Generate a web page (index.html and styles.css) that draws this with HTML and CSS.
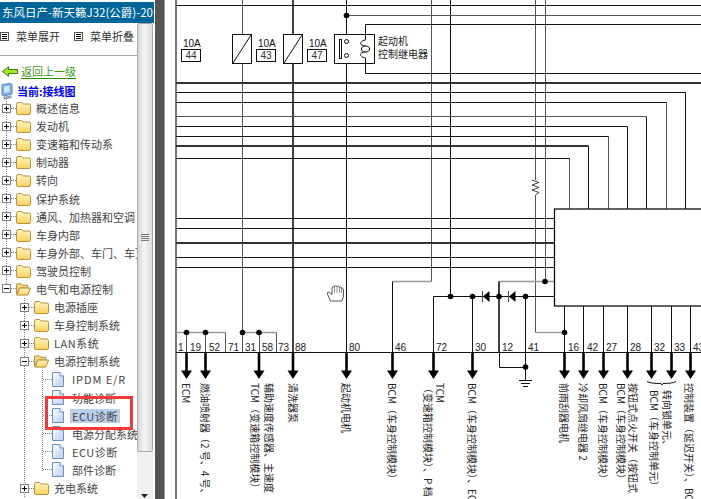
FILE: index.html
```html
<!DOCTYPE html>
<html lang="zh">
<head>
<meta charset="utf-8">
<title>接线图</title>
<link rel="stylesheet" href="styles.css">
</head>
<body>
<svg class="sprites" width="0" height="0" aria-hidden="true">
  <defs>
    <linearGradient id="fold" x1="0" y1="0" x2="0" y2="1"><stop offset="0" stop-color="#fff6c4"/><stop offset="1" stop-color="#fbd25c"/></linearGradient>
    <linearGradient id="page" x1="0" y1="0" x2="1" y2="1"><stop offset="0" stop-color="#ffffff"/><stop offset="1" stop-color="#b9cdf0"/></linearGradient>
    <symbol id="i-plus" viewBox="0 0 9 9"><rect x=".5" y=".5" width="8" height="8" fill="#fff" stroke="#808080"/><path d="M2 4.5H7M4.5 2V7" stroke="#000" fill="none"/></symbol>
    <symbol id="i-minus" viewBox="0 0 9 9"><rect x=".5" y=".5" width="8" height="8" fill="#fff" stroke="#808080"/><path d="M2 4.5H7" stroke="#000" fill="none"/></symbol>
    <symbol id="i-folder" viewBox="0 0 15 14"><path d="M.5 3.5Q.5 1.5 2 1.5H5.5L7 3H13Q14.500 3 14.500 4.500V12Q14.500 13.500 13 13.500H2Q.5 13.500 .5 12Z" fill="url(#fold)" stroke="#b8923c"/></symbol>
    <symbol id="i-open" viewBox="0 0 16 14"><path d="M.5 3Q.5 1.500 2 1.500H5.500L7 3H12.500V6H4L.5 12.500Z" fill="#f6d87e" stroke="#a8863a"/><path d="M4 6H15.500L12.500 13.500H.8Z" fill="url(#fold)" stroke="#a8863a"/></symbol>
    <symbol id="i-file" viewBox="0 0 12 15"><path d="M.5.5H8L11.500 4V14.500H.5Z" fill="url(#page)" stroke="#6b8fc6"/><path d="M8 .5V4H11.500" fill="#fff" stroke="#6b8fc6"/></symbol>
  </defs>
</svg>

<div class="app">
  <aside class="sidebar">
    <div class="title">东风日产-新天籁J32(公爵)-20</div>
    <div class="side-body">
      <div class="pane">
        <div class="menu">
          <span class="menu-item"><svg class="menu-icon" viewBox="0 0 9 9"><rect x=".5" y=".5" width="8" height="8" fill="#fff" stroke="#555"/><path d="M2 2.500H7M2 4.500H7M2 6.500H7" stroke="#000"/></svg>菜单展开</span>
          <span class="menu-item"><svg class="menu-icon" viewBox="0 0 9 9"><rect x=".5" y=".5" width="8" height="8" fill="#fff" stroke="#555"/><path d="M2 2.500H7M2 4.500H7M2 6.500H7" stroke="#000"/></svg>菜单折叠</span>
        </div>
        <a class="back"><svg class="back-icon" viewBox="0 0 16 11"><path d="M.5 5.500L6.500.7V3.500H15.500V7.500H6.500V10.300Z" fill="#a6e22e" stroke="#2f8a00"/></svg><span class="back-text">返回上一级</span></a>
        <div class="current"><svg class="pc-icon" viewBox="0 0 12 17"><path d="M1 1.500L9 .5Q11 .5 11 2.500V11L3 13Q1 13 1 11Z" fill="#7db4ee" stroke="#5c7fb0"/><path d="M3 3.500L8.500 2.800V9L3 10Z" fill="#cfe6ff"/><path d="M2 14L10 12.500L11 15L3 16.500Z" fill="#8da0b8"/></svg><span>当前:接线图</span></div>

        <div class="list top">
          <div class="row"><svg class="exp"><use href="#i-plus"/></svg><i class="dash"></i><svg class="folder"><use href="#i-folder"/></svg><span class="label">概述信息</span></div>
          <div class="row"><svg class="exp"><use href="#i-plus"/></svg><i class="dash"></i><svg class="folder"><use href="#i-folder"/></svg><span class="label">发动机</span></div>
          <div class="row"><svg class="exp"><use href="#i-plus"/></svg><i class="dash"></i><svg class="folder"><use href="#i-folder"/></svg><span class="label">变速箱和传动系</span></div>
          <div class="row"><svg class="exp"><use href="#i-plus"/></svg><i class="dash"></i><svg class="folder"><use href="#i-folder"/></svg><span class="label">制动器</span></div>
          <div class="row"><svg class="exp"><use href="#i-plus"/></svg><i class="dash"></i><svg class="folder"><use href="#i-folder"/></svg><span class="label">转向</span></div>
          <div class="row"><svg class="exp"><use href="#i-plus"/></svg><i class="dash"></i><svg class="folder"><use href="#i-folder"/></svg><span class="label">保护系统</span></div>
          <div class="row"><svg class="exp"><use href="#i-plus"/></svg><i class="dash"></i><svg class="folder"><use href="#i-folder"/></svg><span class="label">通风、加热器和空调</span></div>
          <div class="row"><svg class="exp"><use href="#i-plus"/></svg><i class="dash"></i><svg class="folder"><use href="#i-folder"/></svg><span class="label">车身内部</span></div>
          <div class="row"><svg class="exp"><use href="#i-plus"/></svg><i class="dash"></i><svg class="folder"><use href="#i-folder"/></svg><span class="label">车身外部、车门、车顶</span></div>
          <div class="row"><svg class="exp"><use href="#i-plus"/></svg><i class="dash"></i><svg class="folder"><use href="#i-folder"/></svg><span class="label">驾驶员控制</span></div>
          <div class="row last"><svg class="exp"><use href="#i-minus"/></svg><i class="dash"></i><svg class="folder"><use href="#i-open"/></svg><span class="label">电气和电源控制</span></div>
        </div>
        <div class="list second">
          <div class="row"><svg class="exp"><use href="#i-plus"/></svg><i class="dash"></i><svg class="folder"><use href="#i-folder"/></svg><span class="label">电源插座</span></div>
          <div class="row"><svg class="exp"><use href="#i-plus"/></svg><i class="dash"></i><svg class="folder"><use href="#i-folder"/></svg><span class="label">车身控制系统</span></div>
          <div class="row"><svg class="exp"><use href="#i-plus"/></svg><i class="dash"></i><svg class="folder"><use href="#i-folder"/></svg><span class="label wide">LAN系统</span></div>
          <div class="row"><svg class="exp"><use href="#i-minus"/></svg><i class="dash"></i><svg class="folder"><use href="#i-open"/></svg><span class="label">电源控制系统</span></div>
          <div class="list third">
            <div class="row leaf"><i class="dash long"></i><svg class="file"><use href="#i-file"/></svg><span class="label wider">IPDM E/R</span></div>
            <div class="row leaf"><i class="dash long"></i><svg class="file"><use href="#i-file"/></svg><span class="label">功能诊断</span></div>
            <div class="row leaf"><i class="dash long"></i><svg class="file"><use href="#i-file"/></svg><span class="label selected wide">ECU诊断</span></div>
            <div class="row leaf"><i class="dash long"></i><svg class="file"><use href="#i-file"/></svg><span class="label">电源分配系统</span></div>
            <div class="row leaf"><i class="dash long"></i><svg class="file"><use href="#i-file"/></svg><span class="label wide">ECU诊断</span></div>
            <div class="row leaf last"><i class="dash long"></i><svg class="file"><use href="#i-file"/></svg><span class="label">部件诊断</span></div>
          </div>
          <div class="row"><svg class="exp"><use href="#i-plus"/></svg><i class="dash"></i><svg class="folder"><use href="#i-folder"/></svg><span class="label">充电系统</span></div>
        </div>
      </div>
      <div class="scrollbar">
        <div class="thumb"><span class="grip"></span></div>
        <svg class="scroll-arrow" viewBox="0 0 7 4"><path d="M0 0H7L3.500 4Z" fill="#222"/></svg>
      </div>
    </div>
  </aside>
  <div class="gutter"></div>

  <svg class="diagram" viewBox="165 0 536 499">
    <defs>
      <g id="arrow"><path class="shaft" d="M0 352V371"/><path class="head" d="M-5.500 370.500H5.500L0 379Z"/></g>
      <circle id="dot" r="2.800" class="dotfill"/>
    </defs>

    <!-- vertical wires -->
    <g class="wire gray">
      <path class="frame" d="M176 0V499"/>
      <path d="M242.500 0V34M242.500 63V333"/>
      <path d="M431.500 0V281.500"/>
      <path d="M535.500 0V180M535.500 195V332.500"/>
      <path d="M545.500 0V281.500"/>
      <path d="M569.500 158V209M608.500 136V209M666.500 102.500V209"/>
    </g>
    <g class="wire">
      <path class="heavy" d="M293 0V34M293 63V352"/>
      <path d="M346.500 0V41M346.500 56V352"/>
      <path d="M450.500 0V296"/>
      <path d="M588.500 146V209M627.500 126.500V209M646.500 116.500V209M685.500 92.500V209"/>
    </g>

    <!-- horizontal bus -->
    <g class="wire">
      <path d="M176 5.500H701"/>
      <path class="gray" d="M346 15.500H701"/>
      <path d="M365.500 24.500H701"/>
      <path d="M365.500 73.500H701"/>
      <path class="thick" d="M176 83H701"/>
      <path d="M176 92.500H685.500"/>
      <path d="M176 102.500H666.500"/>
      <path class="gray" d="M176 116.500H646.500"/>
      <path d="M176 126.500H627.500"/>
      <path d="M176 136.500H608.500"/>
      <path class="thick" d="M176 146H588.500"/>
      <path d="M176 158.500H569.500"/>
      <path d="M176 218.500H554"/>
      <path d="M176 228.500H554"/>
      <path class="thick" d="M176 243H554"/>
      <path d="M176 257.500H554"/>
      <path d="M176 267.500H554"/>
    </g>

    <!-- lower wires -->
    <g class="wire">
      <path class="lite" d="M392.500 281.500H431.500"/>
      <path d="M392.500 281.500V352"/>
      <path class="lite" d="M499 281.500H554"/>
      <path class="heavy" d="M499 281.500V352"/>
      <path d="M499.500 352V367.500H525.500"/>
      <path d="M433.500 296.500H554"/>
      <path d="M433.500 296.500V352"/>
      <path d="M472.500 296.500V352"/>
      <path d="M525.500 296.500V380"/>
      <path d="M519 380.500H532M521 383.500H530M523 386.500H528"/>
      <path class="lite" d="M535.500 332.500H564.500"/>
      <path class="lite" d="M176 332.500H225.500"/>
      <path class="lite" d="M242.500 332.500H276.500"/>
      <path class="gray" d="M225.500 332.500V352M276.500 332.500V352M186.500 333V352M205.500 333V352M259.500 333V352M242.500 333V352"/>
      <path d="M564.500 306V352M583.500 306V352M603.500 306V352M627.500 306V352M651.500 306V352M671.500 306V352M690.500 306V352"/>
      <path class="thin" d="M532 180L539 182.500L532 185L539 187.500L532 190L539 192.500L535.500 195"/>
    </g>

    <!-- control unit -->
    <rect class="box unit" x="554.500" y="209" width="160" height="97"/>

    <!-- diodes -->
    <path class="head" d="M483 296.500L489.500 291V302Z"/>
    <path class="wire bar" d="M482.500 291V302"/>
    <path class="head" d="M509 296.500L515.500 291V302Z"/>
    <path class="wire bar" d="M508.500 291V302"/>

    <!-- dots -->
    <use href="#dot" x="346.500" y="15.500"/>
    <use href="#dot" x="186.500" y="332.500"/><use href="#dot" x="205.500" y="332.500"/>
    <use href="#dot" x="242.500" y="332.500"/><use href="#dot" x="259" y="332.500"/>
    <use href="#dot" x="564.500" y="332.500"/><use href="#dot" x="525.500" y="367"/>
    <use href="#dot" x="545" y="281.500"/>
    <use href="#dot" x="450.500" y="296.500"/><use href="#dot" x="472.500" y="296.500"/>
    <use href="#dot" x="499" y="296.500"/><use href="#dot" x="525.500" y="296.500"/>

    <!-- fuses -->
    <g class="fuse">
      <text x="183" y="47">10A</text><rect class="box" x="181.500" y="49.500" width="19" height="12"/><text class="fuse-no" x="191" y="59">44</text>
      <text x="258" y="47">10A</text><rect class="box" x="256.500" y="49.500" width="19" height="12"/><text class="fuse-no" x="266" y="59">43</text>
      <text x="309" y="47">10A</text><rect class="box" x="307.500" y="49.500" width="19" height="12"/><text class="fuse-no" x="317" y="59">47</text>
    </g>

    <!-- relays -->
    <rect class="box" x="232.500" y="34.500" width="19" height="29"/><path class="wire" d="M233 63L251 35"/>
    <rect class="box" x="283.500" y="34.500" width="19" height="29"/><path class="wire" d="M284 63L302 35"/>
    <rect class="box" x="334.500" y="34.500" width="40" height="29"/>
    <path class="wire" d="M365.500 24.500V40M365.500 58V73.500"/>
    <rect class="wire solid" x="339.500" y="39.500" width="2" height="19"/>
    <circle class="ring" cx="346.500" cy="41.500" r="2"/><circle class="ring" cx="346.500" cy="55.500" r="2"/>
    <path class="wire" d="M365.500 40C359 41 359 46 365.500 46C371 46 371 52 365.500 52C359 52 359 57 365.500 58M365.500 46C360 46 360 52 365.500 52"/>
    <text class="note" x="378" y="45">起动机</text>
    <text class="note" x="378" y="58">控制继电器</text>

    <!-- main connector line -->
    <path class="wire" d="M176 352.500H701"/>
    <g class="pins">
      <text x="178" y="351">1</text><text x="190" y="351">19</text><text x="209" y="351">52</text>
      <text x="228" y="351">71</text><text x="245" y="351">31</text><text x="262" y="351">58</text>
      <text x="278" y="351">73</text><text x="295" y="351">88</text><text x="349" y="351">80</text>
      <text x="395" y="351">46</text><text x="436" y="351">72</text><text x="475" y="351">30</text>
      <text x="502" y="351">12</text><text x="528" y="351">41</text><text x="568" y="351">16</text>
      <text x="587" y="351">42</text><text x="606" y="351">27</text><text x="630" y="351">28</text>
      <text x="654" y="351">32</text><text x="674" y="351">33</text><text x="693" y="351">43</text>
    </g>

    <!-- arrows -->
    <use href="#arrow" x="186.500"/><use href="#arrow" x="205.500"/><use href="#arrow" x="259"/>
    <use href="#arrow" x="293"/><use href="#arrow" x="346.500"/><use href="#arrow" x="392.500"/>
    <use href="#arrow" x="433.500"/><use href="#arrow" x="472.500"/><use href="#arrow" x="564.500"/>
    <use href="#arrow" x="583.500"/><use href="#arrow" x="603.500"/><use href="#arrow" x="627.500"/>
    <use href="#arrow" x="651.500"/><use href="#arrow" x="671.500"/><use href="#arrow" x="690.500"/>

    <path class="wire" d="M647 381.500Q650 383.500 661 383.500L662 385L663 383.500Q673 383.500 676 381.500"/>

    <!-- vertical labels -->
    <g class="vlabels">
      <text transform="translate(186 383) rotate(90)">ECM</text>
      <text transform="translate(205 383) rotate(90)">燃油喷射器（2 号、4 号、</text>
      <text transform="translate(255 383) rotate(90)">TCM（变速箱控制模块）</text>
      <text transform="translate(269 383) rotate(90)">辅助速度传感器、主速度</text>
      <text transform="translate(293 383) rotate(90)">清洗器泵</text>
      <text transform="translate(346.500 383) rotate(90)">起动机电机</text>
      <text transform="translate(392 383) rotate(90)">BCM（车身控制模块）</text>
      <text transform="translate(440 383) rotate(90)">TCM</text>
      <text transform="translate(428 383) rotate(90)">（变速箱控制模块）、P 档</text>
      <text transform="translate(472 383) rotate(90)">BCM（车身控制模块）、ECM</text>
      <text transform="translate(564 383) rotate(90)">前雨刮器电机</text>
      <text transform="translate(583 383) rotate(90)">冷却风扇继电器 2</text>
      <text transform="translate(603 383) rotate(90)">BCM（车身控制模块）</text>
      <text transform="translate(621 383) rotate(90)">BCM（车身控制模块）</text>
      <text transform="translate(633 383) rotate(90)">按钮式点火开关（按钮式</text>
      <text transform="translate(654 390) rotate(90)">BCM（车身控制单元）</text>
      <text transform="translate(667 390) rotate(90)">转向锁单元、</text>
      <text transform="translate(689 383) rotate(90)">控制装置（延迟开关）、BCM</text>
    </g>

    <!-- hand cursor -->
    <path class="hand" d="M330.500 301L327.500 294Q327 291.500 329 292L332 294.500V287.500Q333 286 334.500 287V286Q336 285 337 286.500Q338.500 285.500 339.500 287Q341 286.500 341.500 288Q343.500 288 343.500 290V296L342 301Z"/>
    <path class="hand-line" d="M334.500 287V293M337 286.500V293M339.500 287V293M341.500 288V293"/>
  </svg>

  <div class="callout"></div>
</div>
</body>
</html>
```

FILE: styles.css
```css
html, body { margin: 0; padding: 0; background: #fff; }
body { width: 701px; height: 499px; overflow: hidden; font-family: "Noto Sans CJK SC", "Noto Sans", sans-serif; }
.sprites { position: absolute; }

.app { position: relative; display: flex; width: 701px; height: 499px; overflow: hidden; background: #fff; }

.sidebar { display: flex; flex-direction: column; width: 155px; padding-top: 2px; box-sizing: border-box; }
.title { height: 21px; width: 154px; padding-left: 2px; box-sizing: border-box; background: #006699; color: #fff; font-size: 11.5px; line-height: 21px; white-space: nowrap; overflow: hidden; }
.side-body { display: flex; flex: 1; min-height: 0; }
.pane { width: 137px; flex: none; overflow: hidden; }

.menu { display: flex; height: 33px; box-sizing: border-box; border-bottom: 1px solid #a8a8a8; padding-top: 6px; font-size: 11px; line-height: 14px; color: #333; }
.menu-item { display: flex; align-items: center; height: 14px; white-space: nowrap; }
.menu-item:first-child { width: 74px; }
.menu-icon { width: 9px; height: 9px; margin-right: 7px; flex: none; }
.menu-item + .menu-item .menu-icon { margin-right: 7px; }

.back { display: flex; align-items: center; height: 16px; margin-top: 7px; padding-left: 2px; font-size: 11px; }
.back-icon { width: 16px; height: 11px; margin-right: 3px; flex: none; }
.back-text { color: #3c9a1a; border-bottom: 1px solid #2f8f00; line-height: 14px; }

.current { display: flex; align-items: center; height: 18px; margin-top: 3px; padding-left: 1px; font-size: 11px; font-weight: 700; color: #0000ee; }
.pc-icon { width: 12px; height: 17px; margin-right: 4px; flex: none; }

.list { border-left: 1px dotted #808080; }
.top { margin-left: 6px; margin-top: -1px; }
.second { margin-left: 24px; }
.third { margin-left: 17px; }

.row { position: relative; display: flex; align-items: center; height: 18.1px; font-size: 11px; color: #444; white-space: nowrap; }
.row.last::before { content: ""; position: absolute; left: -1px; top: 10px; bottom: 0; width: 1px; background: #fff; }
.exp { width: 9px; height: 9px; margin-left: -5px; flex: none; position: relative; }
.dash { width: 5px; height: 0; border-top: 1px dotted #808080; flex: none; }
.dash.long { width: 9px; }
.folder { width: 15px; height: 14px; margin-right: 5px; flex: none; }
.file { width: 12px; height: 15px; margin-right: 8px; flex: none; }
.label { line-height: 14px; letter-spacing: 0; }
.label.wide { letter-spacing: .5px; }
.label.wider { letter-spacing: .9px; }
.selected { background: #b9cfea; padding-right: 2px; margin-left: -2px; padding-left: 2px; }

.scrollbar { position: relative; width: 16px; flex: none; background: #f0f0f0; }
.thumb { display: flex; align-items: center; justify-content: center; height: 429px; box-sizing: border-box; border: 1px solid #a9a9a9; border-radius: 2px; background: linear-gradient(to right, #d6d6d6, #f6f6f6 45%, #dcdcdc); }
.grip { width: 8px; height: 7px; background: repeating-linear-gradient(to bottom, #777 0 1px, transparent 1px 2px); }
.scroll-arrow { position: absolute; left: 4px; bottom: 1px; width: 7px; height: 4px; }

.gutter { width: 10px; flex: none; box-sizing: border-box; background: #555; border-right: 1px solid #9a9a9a; }

.diagram { width: 536px; height: 499px; flex: none; display: block; background: #fff; }
.wire { fill: none; stroke: #111; stroke-width: 1; }
.wire .gray, .wire.gray { stroke: #555; }
.wire .frame { stroke: #777; stroke-width: 2; }
.wire .lite { stroke: #999; stroke-width: 1.300; }
.wire .thick { stroke: #333; stroke-width: 1.800; }
.wire .heavy { stroke: #111; stroke-width: 1.600; }
.wire .thin { stroke-width: .8; }
.wire.bar { stroke-width: 1; stroke: #444; }
.wire.solid { fill: #fff; }
.box { fill: #fff; stroke: #111; stroke-width: 1; }
.box.unit { stroke-width: 1.300; }
.head { fill: #000; stroke: none; }
.shaft { fill: none; stroke: #000; stroke-width: 2.600; }
.dotfill { fill: #000; }
.ring { fill: #fff; stroke: #111; stroke-width: 1; }
.fuse text { font-family: "Liberation Sans", sans-serif; font-size: 10px; fill: #111; }
.fuse .fuse-no { text-anchor: middle; fill: #333; }
.note { font-size: 10px; fill: #222; }
.pins text { font-family: "Liberation Sans", sans-serif; font-size: 10px; fill: #222; }
.vlabels text { font-size: 10px; fill: #222; dominant-baseline: central; }
.hand { fill: #fff; stroke: #445; stroke-width: .9; }
.hand-line { fill: none; stroke: #445; stroke-width: .6; }

.callout { position: absolute; left: 45px; top: 396px; width: 88px; height: 34px; box-sizing: border-box; border: 3px solid #f23a3a; pointer-events: none; }
```
